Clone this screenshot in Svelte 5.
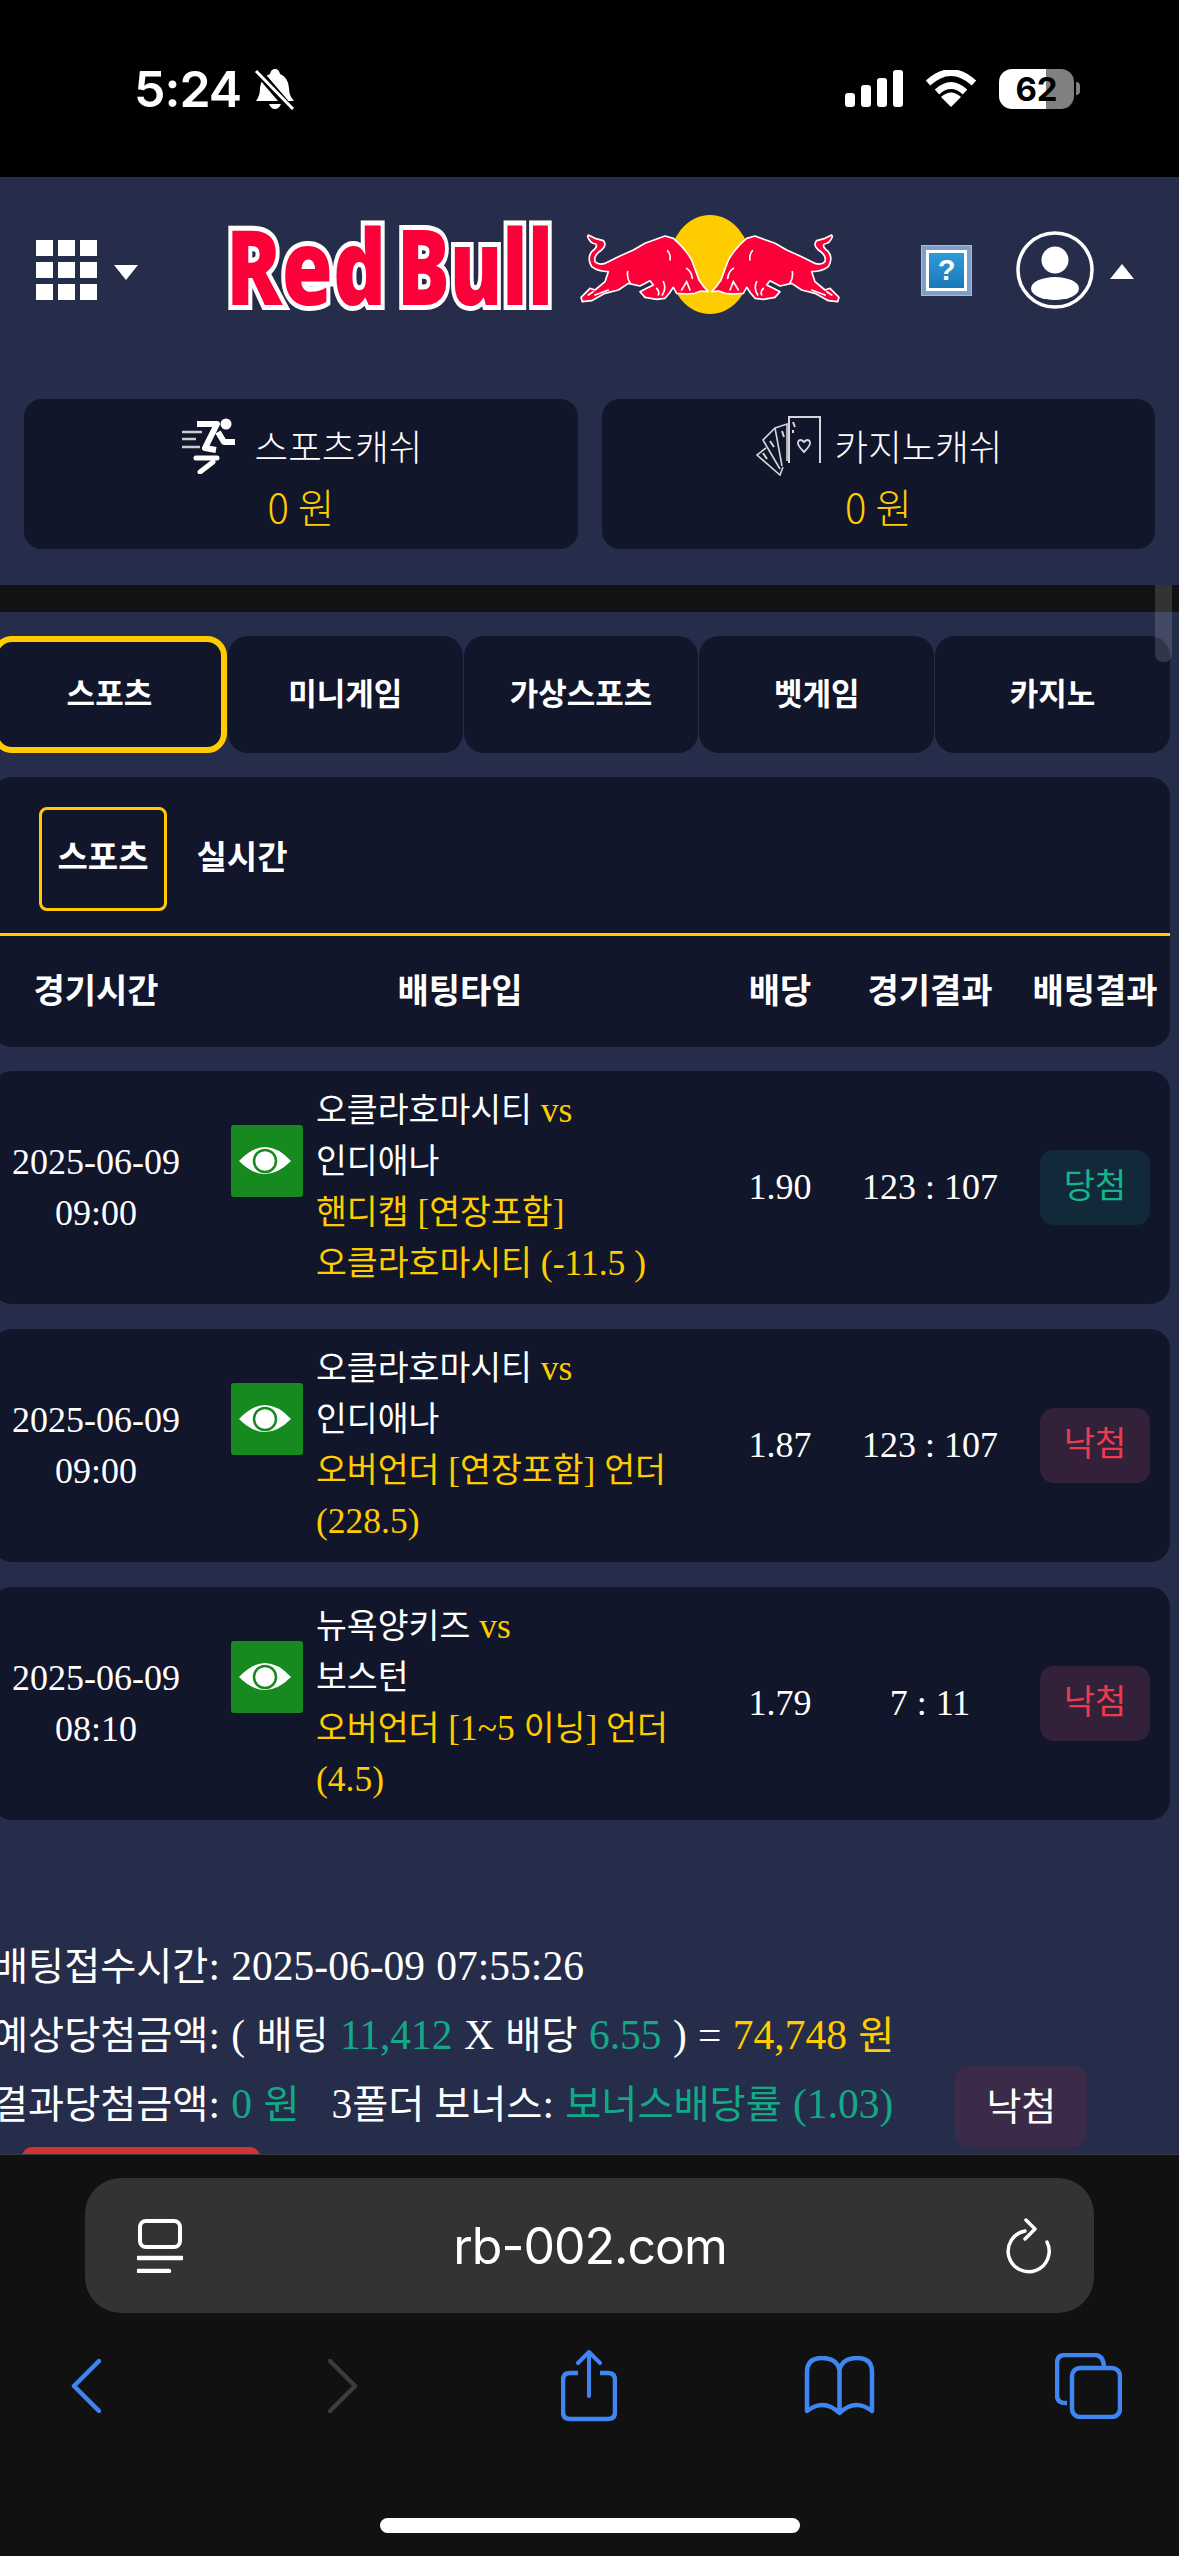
<script>
  const rows = [
    {
      date: '2025-06-09', time: '09:00', home: '오클라호마시티', away: '인디애나',
      market: ['핸디캡 [연장포함]', '오클라호마시티 (-11.5 )'],
      odds: '1.90', score: '123 : 107', result: '당첨', won: true,
    },
    {
      date: '2025-06-09', time: '09:00', home: '오클라호마시티', away: '인디애나',
      market: ['오버언더 [연장포함] 언더 (228.5)'],
      odds: '1.87', score: '123 : 107', result: '낙첨', won: false,
    },
    {
      date: '2025-06-09', time: '08:10', home: '뉴욕양키즈', away: '보스턴',
      market: ['오버언더 [1~5 이닝] 언더 (4.5)'],
      odds: '1.79', score: '7 : 11', result: '낙첨', won: false,
    },
  ];

  const tabs = ['스포츠', '미니게임', '가상스포츠', '벳게임', '카지노'];

  // hangul runs get their own size, latin stays in the serif
  function parts(s) {
    return s.split(/([가-힣]+(?:\s[가-힣]+)*)/).filter(Boolean);
  }
  const isKo = (s) => /[가-힣]/.test(s);
</script>

{#snippet mixed(s)}{#each parts(s) as p}{#if isKo(p)}<span class="ko">{p}</span>{:else}{p}{/if}{/each}{/snippet}

{#snippet bull()}
  <path d="M40 75 L60 85 L85 92 Q97 105 80 120 Q55 135 60 155 Q75 170 100 155 L130 140 L175 120 L210 100 L270 78 L295 85 Q330 115 350 150 L372 210 Q385 230 400 245 L378 243 L360 250 L335 252 L305 250 L295 232 L283 250 L270 265 L245 268 L210 262 L195 245 L215 235 L235 225 L225 212 L195 228 L160 220 L130 240 L90 250 L50 272 L22 275 L18 262 L45 235 L60 240 L90 215 L100 185 Q70 185 50 170 Q35 145 50 125 Q70 110 62 102 Q45 100 38 80 Z" fill="#fb0039" stroke="#fff" stroke-width="5" stroke-linejoin="round" />
  <path d="M278 122 Q288 135 285 150 M335 175 Q350 185 352 205 M320 240 L335 215 L345 240 M245 235 Q255 245 250 255 M265 215 Q275 235 262 255 M158 185 Q155 205 165 218 M60 255 L100 240 M40 255 L55 245" fill="none" stroke="#fff" stroke-width="5" stroke-linecap="round" />
{/snippet}

<div class="phone">
  <div class="status">
    <span class="clock">5:24</span>
    <svg class="bell" width="42" height="42" viewBox="0 0 42 42">
      <path d="M21 1 Q25 1 26 6 Q34 9 35 20 Q35 28 40 33 L2 33 Q6 28 6 20 Q7 9 16 6 Q17 1 21 1 Z" fill="#fff" />
      <path d="M15 36 H27 Q25 41 21 41 Q17 41 15 36 Z" fill="#fff" />
      <path d="M1 0 L37 42" stroke="#000" stroke-width="8" />
      <path d="M2 3 L39 41" stroke="#fff" stroke-width="3" />
    </svg>
    <svg class="cell" width="58" height="38" viewBox="0 0 58 38">
      <rect x="0" y="23" width="10" height="14" rx="3" fill="#fff" />
      <rect x="16" y="15" width="10" height="22" rx="3" fill="#fff" />
      <rect x="32" y="8" width="10" height="29" rx="3" fill="#fff" />
      <rect x="48" y="0" width="10" height="37" rx="3" fill="#fff" />
    </svg>
    <svg class="wifi" width="52" height="38" viewBox="0 0 52 38">
      <path d="M3 13 Q26 -8 49 13" fill="none" stroke="#fff" stroke-width="6.5" />
      <path d="M12 22 Q26 9 40 22" fill="none" stroke="#fff" stroke-width="6.5" />
      <path d="M16 27 Q26 18 36 27 L26 37 Z" fill="#fff" />
    </svg>
    <span class="battery">62</span>
    <span class="nub"></span>
  </div>

  <header class="top">
    <div class="toprow">
      <svg class="apps" width="62" height="60" viewBox="0 0 62 60">
        {#each [0, 22, 44] as y}
          {#each [0, 22, 44] as x}
            <rect {x} {y} width="17" height="16" fill="#fff" />
          {/each}
        {/each}
      </svg>
      <span class="tri-down"></span>

      <svg class="logo" width="615" height="120" viewBox="225 210 615 120">
        <ellipse cx="710" cy="264.5" rx="41" ry="49.5" fill="#ffcc00" />
        <text class="rb" x="226" y="305" textLength="160" lengthAdjust="spacingAndGlyphs">Red</text>
        <text class="rb" x="397" y="305" textLength="156" lengthAdjust="spacingAndGlyphs">Bull</text>
        <g transform="translate(575 210) scale(.3333)">{@render bull()}</g>
        <g transform="translate(845 210) scale(-.3333 .3333)">{@render bull()}</g>
      </svg>

      <div class="help"><span>?</span></div>

      <svg class="avatar" width="78" height="78" viewBox="0 0 78 78">
        <circle cx="39" cy="39" r="37" fill="none" stroke="#fff" stroke-width="3.5" />
        <circle cx="39" cy="29" r="13.5" fill="#fff" />
        <ellipse cx="39" cy="57.5" rx="24" ry="11.5" fill="#fff" />
      </svg>
      <span class="tri-up"></span>
    </div>

    <div class="cash">
      <div class="cash-card">
        <div class="cash-title">
          <svg class="runner" width="55" height="56" viewBox="0 0 55 56">
            <circle cx="46" cy="6" r="5.5" fill="#fff" />
            <path d="M17 6 H37 L25 30 L36 32 M38 14 L44 24 H55" fill="none" stroke="#fff" stroke-width="6" stroke-linejoin="round" />
            <path d="M16 40 H37 M33 44 L20 54" fill="none" stroke="#fff" stroke-width="5" stroke-linecap="round" />
            <path d="M2 14 H22 M2 21 H16 M2 29 H20" fill="none" stroke="#c9cbd2" stroke-width="2.5" />
          </svg>
          <span>스포츠캐쉬</span>
        </div>
        <div class="cash-amount">0 원</div>
      </div>
      <div class="cash-card">
        <div class="cash-title">
          <svg width="66" height="60" viewBox="0 0 66 60">
            <path d="M34 47 V1 H65 V47" fill="none" stroke="#d5d6da" stroke-width="2" />
            <path d="M32 45 L32 8 L20 12 L27 50" fill="none" stroke="#d5d6da" stroke-width="1.6" />
            <path d="M20 12 L8 24 L25 53" fill="none" stroke="#d5d6da" stroke-width="1.6" />
            <path d="M11 32 L2 39 L25 59 L28 51" fill="none" stroke="#d5d6da" stroke-width="1.6" />
            <path d="M49 36 Q42 29 43 26 Q45 22 49 26 Q53 22 55 26 Q56 29 49 36 Z" fill="none" stroke="#d5d6da" stroke-width="1.8" />
            <path d="M38 6 L40 11 M38 14 L38 17 M27 15 L29 21 M15 25 L19 31 M8 37 L12 43" stroke="#d5d6da" stroke-width="2" />
          </svg>
          <span>카지노캐쉬</span>
        </div>
        <div class="cash-amount">0 원</div>
      </div>
    </div>
  </header>

  <div class="web">
    <div class="strip"></div>
    <div class="thumb"></div>
    <div class="page">
      <nav class="tabs">
        {#each tabs as t, i}
          <div class="tab" class:active={i === 0}>{t}</div>
        {/each}
      </nav>

      <section class="panel">
        <div class="subtabs">
          <div class="subtab active">스포츠</div>
          <div class="subtab">실시간</div>
        </div>
        <div class="thead">
          <span>경기시간</span>
          <span class="type">배팅타입</span>
          <span>배당</span>
          <span>경기결과</span>
          <span>배팅결과</span>
        </div>
      </section>

      {#each rows as r}
        <article class="row">
          <div class="when">
            <div>{r.date}</div>
            <div>{r.time}</div>
          </div>
          <svg class="eye" width="72" height="72" viewBox="0 0 72 72">
            <rect width="72" height="72" rx="3" fill="#168a1e" />
            <path d="M8 36 Q34 8 60 36 Q34 62 8 36 Z" fill="#fff" />
            <circle cx="34" cy="36" r="11" fill="none" stroke="#168a1e" stroke-width="2.5" />
            <path d="M35 28 L37 33 L42 34 V38 Q40 44 34 43 Q28 42 28 36 Q29 31 35 28 Z" fill="#fff" />
          </svg>
          <div class="game">
            <div><span class="ko">{r.home}</span> <span class="yellow">vs</span></div>
            <div><span class="ko">{r.away}</span></div>
            {#each r.market as m}
              <div class="yellow">{@render mixed(m)}</div>
            {/each}
          </div>
          <div class="cell-c">{r.odds}</div>
          <div class="cell-c">{r.score}</div>
          <div class="cell-c"><span class="badge" class:won={r.won}>{r.result}</span></div>
        </article>
      {/each}

      <section class="summary">
        <div><span class="ko">배팅접수시간</span>: 2025-06-09 07:55:26</div>
        <div><span class="ko">예상당첨금액</span>: ( <span class="ko">배팅</span> <span class="green">11,412</span> X <span class="ko">배당</span> <span class="green">6.55</span> ) = <span class="yellow">74,748 <span class="ko">원</span></span></div>
        <div class="last">
          <span><span class="ko">결과당첨금액</span>: <span class="green">0 <span class="ko">원</span></span></span>
          <span class="bonus">3<span class="ko">폴더 보너스</span>: <span class="green"><span class="ko">보너스배당률</span> (1.03)</span></span>
          <span class="lost">낙첨</span>
        </div>
        <div class="cancel"></div>
      </section>
    </div>
  </div>

  <footer class="safari">
    <div class="url">
      <svg width="46" height="54" viewBox="0 0 46 54">
        <rect x="3" y="2" width="40" height="26" rx="6" fill="none" stroke="#fff" stroke-width="4" />
        <path d="M1 39 H45" stroke="#fff" stroke-width="4.5" stroke-linecap="round" />
        <path d="M1 52 H32" stroke="#fff" stroke-width="4.5" stroke-linecap="round" />
      </svg>
      <span class="host">rb-002.com</span>
      <svg width="46" height="56" viewBox="0 0 46 56">
        <path d="M20 13 A20.5 20.5 0 1 0 42 24" fill="none" stroke="#fff" stroke-width="3.5" stroke-linecap="round" />
        <path d="M21 2 L30 11 L20 21" fill="none" stroke="#fff" stroke-width="3.5" stroke-linecap="round" stroke-linejoin="round" />
      </svg>
    </div>

    <div class="tools">
      <svg class="t-back" width="30" height="54" viewBox="0 0 30 54">
        <path d="M28 2 L3 27 L28 52" fill="none" stroke="#3f86f2" stroke-width="4.5" stroke-linecap="round" stroke-linejoin="round" />
      </svg>
      <svg class="t-fwd" width="30" height="54" viewBox="0 0 30 54">
        <path d="M2 2 L27 27 L2 52" fill="none" stroke="#3c3c3e" stroke-width="4.5" stroke-linecap="round" stroke-linejoin="round" />
      </svg>
      <svg class="t-share" width="56" height="72" viewBox="0 0 56 72">
        <path d="M17 23 H9 Q2 23 2 30 V62 Q2 69 9 69 H47 Q54 69 54 62 V30 Q54 23 47 23 H39" fill="none" stroke="#3f86f2" stroke-width="4.5" />
        <path d="M28 3 V46 M17 13 L28 2 L39 13" fill="none" stroke="#3f86f2" stroke-width="4" stroke-linecap="round" stroke-linejoin="round" />
      </svg>
      <svg class="t-book" width="71" height="60" viewBox="0 0 71 60">
        <path d="M35.5 14 Q33 2 18 2 Q3 2 3 16 V55 Q20 42 35.5 57 Q51 42 68 55 V16 Q68 2 53 2 Q38 2 35.5 14 Z M35.5 14 V57" fill="none" stroke="#3f86f2" stroke-width="4.5" stroke-linejoin="round" />
      </svg>
      <svg class="t-tabs" width="67" height="66" viewBox="0 0 67 66">
        <path d="M12 50 H10 Q2 50 2 42 V10 Q2 2 10 2 H40 Q48 2 49 13" fill="none" stroke="#3f86f2" stroke-width="4.5" />
        <rect x="17" y="15" width="48" height="49" rx="8" fill="none" stroke="#3f86f2" stroke-width="4.5" />
      </svg>
    </div>

    <div class="home"></div>
  </footer>
</div>

<style>
  :global(body) {
    margin: 0;
    background: #000;
  }

  .phone {
    width: 1179px;
    height: 2556px;
    display: flex;
    flex-direction: column;
    overflow: hidden;
    background: #262d4a;
    font-family: "Liberation Serif", "Noto Sans CJK KR", serif;
    color: #fff;
  }

  .ko {
    font-family: "Noto Sans CJK KR", sans-serif;
    font-size: .945em;
    line-height: 1;
  }

  .yellow { color: #ffcc00; }
  .green { color: #13a986; }

  /* status bar */
  .status {
    height: 177px;
    flex-shrink: 0;
    background: #000;
    display: flex;
    align-items: center;
    padding: 0 99px 0 134px;
    box-sizing: border-box;
  }

  .clock {
    font-family: Inter, sans-serif;
    font-size: 50px;
    font-weight: 600;
    letter-spacing: -1px;
    line-height: 1;
    width: 120px;
  }

  .bell { margin-right: auto; }
  .wifi { margin-left: 22px; }

  .battery {
    margin-left: 22px;
    width: 75px;
    height: 40px;
    border-radius: 13px;
    background: linear-gradient(90deg, #fff 0 47px, #808080 47px);
    color: #000;
    font-family: Inter, sans-serif;
    font-size: 33px;
    font-weight: 700;
    line-height: 40px;
    text-align: center;
  }

  .nub {
    width: 4px;
    height: 13px;
    margin-left: 2px;
    background: #808080;
    border-radius: 0 4px 4px 0;
  }

  /* site header */
  .top {
    height: 408px;
    flex-shrink: 0;
  }

  .toprow {
    height: 186px;
    display: flex;
    align-items: center;
    padding-left: 36px;
  }

  .tri-down, .tri-up {
    width: 0;
    height: 0;
    border-left: 12px solid transparent;
    border-right: 12px solid transparent;
  }

  .tri-down {
    border-top: 15px solid #fff;
    margin: 5px 0 0 16px;
  }

  .tri-up {
    border-bottom: 15px solid #fff;
    margin: 2px 0 0 16px;
  }

  .logo {
    margin-left: 87px;
    flex-shrink: 0;
  }

  .rb {
    font-family: "Open Sans", "Liberation Sans", sans-serif;
    font-weight: 800;
    font-size: 104px;
    fill: #fb0039;
    stroke: #fff;
    stroke-width: 10px;
    paint-order: stroke;
    stroke-linejoin: miter;
  }

  .help {
    width: 51px;
    height: 51px;
    box-sizing: border-box;
    margin-left: 81px;
    padding: 4px;
    background: #7f9fc6;
    border: 1px solid #b5b8bc;
  }

  .help span {
    display: block;
    height: 100%;
    box-sizing: border-box;
    border: 3px solid #fff;
    background: linear-gradient(#2c9cd8, #1b78b9);
    font-family: "Liberation Sans", sans-serif;
    font-size: 29px;
    font-weight: 700;
    line-height: 35px;
    text-align: center;
  }

  .avatar { margin-left: 44px; }

  .cash {
    display: grid;
    grid-template-columns: 554px 553px;
    gap: 24px;
    padding: 36px 0 0 24px;
  }

  .cash-card {
    height: 150px;
    background: #11162b;
    border-radius: 18px;
    text-align: center;
  }

  .cash-title {
    height: 60px;
    padding-top: 17px;
    display: flex;
    justify-content: center;
    align-items: center;
    gap: 14px;
    font-family: "Noto Sans CJK KR", sans-serif;
    font-size: 36.5px;
    font-weight: 300;
    line-height: 60px;
  }

  .runner { margin-right: 6px; }

  .cash-amount {
    padding-top: 4px;
    color: #ffcc00;
    font-family: "Noto Sans CJK KR", sans-serif;
    font-size: 40px;
    font-weight: 300;
    line-height: 52px;
  }

  /* scrolling part */
  .web {
    flex: 1;
    min-height: 0;
    position: relative;
    overflow: hidden;
  }

  .strip {
    height: 27px;
    background: #111214;
  }

  .thumb {
    position: absolute;
    top: 0;
    right: 7px;
    width: 17px;
    height: 77px;
    border-radius: 0 0 8px 8px;
    background: rgba(255, 255, 255, .14);
  }

  .page {
    width: 1178px;
    margin-left: -8px;
  }

  .tabs {
    display: grid;
    grid-template-columns: repeat(5, 1fr);
    gap: 1px;
    padding-top: 24px;
  }

  .tab {
    height: 117px;
    box-sizing: border-box;
    padding-bottom: 6px;
    display: flex;
    align-items: center;
    justify-content: center;
    background: #11162b;
    border-radius: 20px;
    font-family: "Noto Sans CJK KR", sans-serif;
    font-size: 31px;
    font-weight: 700;
  }

  .tab.active {
    border: 6px solid #ffcc00;
  }

  .panel {
    margin-top: 24px;
    height: 270px;
    background: #11162b;
    border-radius: 20px;
    overflow: hidden;
  }

  .subtabs {
    display: flex;
    align-items: center;
    gap: 17px;
    height: 159px;
    box-sizing: border-box;
    padding: 7px 0 0 47px;
    border-bottom: 3px solid #ffcc00;
    font-family: "Noto Sans CJK KR", sans-serif;
    font-size: 33px;
    font-weight: 700;
  }

  .subtab {
    width: 122px;
    height: 104px;
    display: flex;
    align-items: center;
    justify-content: center;
    padding-bottom: 8px;
    box-sizing: border-box;
  }

  .subtab.active {
    width: 128px;
    border: 3px solid #ffcc00;
    border-radius: 8px;
  }

  .subtab:last-child {
    width: 92px;
    margin-left: 12px;
  }

  .thead, .row {
    display: grid;
    grid-template-columns: 208px 116px 404px 120px 180px 150px;
  }

  .thead {
    height: 111px;
    box-sizing: border-box;
    padding-bottom: 6px;
    align-items: center;
    text-align: center;
    font-family: "Noto Sans CJK KR", sans-serif;
    font-size: 34px;
    font-weight: 700;
  }

  .thead .type { grid-column: span 2; }

  .row {
    margin-top: 25px;
    height: 233px;
    box-sizing: border-box;
    background: #11162b;
    border-radius: 20px;
    align-items: center;
    font-size: 36px;
    line-height: 51px;
  }

  .panel + .row { margin-top: 24px; }

  .when, .cell-c { text-align: center; }

  .eye {
    align-self: start;
    margin: 54px 0 0 31px;
  }

  .game {
    font-size: 35.5px;
    padding: 0 20px 2px 0;
  }

  .badge {
    display: inline-block;
    width: 110px;
    height: 75px;
    border-radius: 14px;
    background: #33213a;
    color: #ec3b4e;
    font-family: "Noto Sans CJK KR", sans-serif;
    font-size: 34px;
    font-weight: 400;
    line-height: 68px;
    vertical-align: middle;
  }

  .badge.won {
    background: #12293a;
    color: #13b58a;
  }

  .summary {
    margin-top: 112px;
    font-size: 41.5px;
    line-height: 69px;
    word-spacing: 1px;
    white-space: nowrap;
  }

  .last {
    display: flex;
    align-items: center;
    height: 69px;
  }

  .bonus { margin-left: 32px; }

  .lost {
    margin: 4px 0 0 62px;
    width: 132px;
    height: 81px;
    flex-shrink: 0;
    border-radius: 14px;
    background: #3b2b48;
    text-align: center;
    font-family: "Noto Sans CJK KR", sans-serif;
    font-size: 38px;
    font-weight: 400;
    line-height: 76px;
  }

  .cancel {
    margin: 8px 0 0 30px;
    width: 238px;
    height: 40px;
    border-radius: 10px;
    background: #cf3434;
  }

  /* browser chrome */
  .safari {
    height: 402px;
    flex-shrink: 0;
    box-sizing: border-box;
    background: #111112;
    border-top: 1px solid #3a3b40;
  }

  .url {
    margin: 23px 85px 0;
    height: 135px;
    border-radius: 36px;
    background: #333333;
    display: flex;
    align-items: center;
    justify-content: space-between;
    padding: 0 43px 0 52px;
  }

  .host {
    font-family: Inter, sans-serif;
    font-size: 50px;
    letter-spacing: -1px;
    margin-right: 8px;
  }

  .tools {
    display: flex;
    align-items: center;
    height: 74px;
    margin-top: 36px;
    padding-left: 71px;
  }

  .t-fwd { margin-left: 227px; }
  .t-share { margin-left: 203px; }
  .t-book { margin-left: 187px; }
  .t-tabs { margin-left: 180px; }

  .home {
    width: 420px;
    height: 15px;
    margin: 95px 0 0 380px;
    border-radius: 8px;
    background: #fff;
  }
</style>
